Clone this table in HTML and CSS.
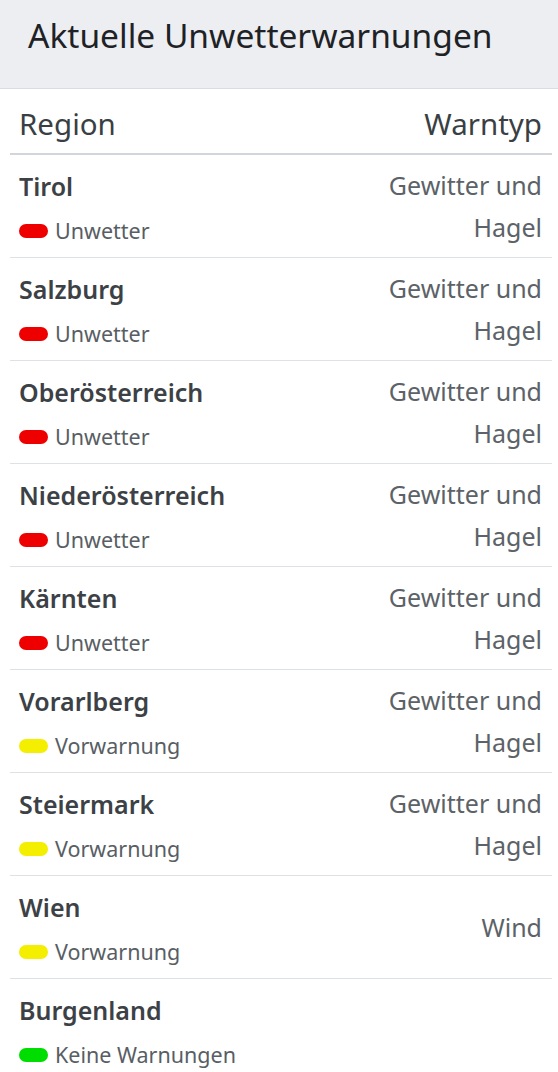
FILE: index.html
```html
<!DOCTYPE html>
<html lang="de">
<head>
<meta charset="utf-8">
<title>Aktuelle Unwetterwarnungen</title>
<link rel="stylesheet" href="styles.css">
</head>
<body>
<header class="panel-head">
  <h1 class="title">Aktuelle Unwetterwarnungen</h1>
</header>
<section class="warn-table">
  <div class="thead">
    <span class="th">Region</span>
    <span class="th th-right">Warntyp</span>
  </div>
  <div class="row">
    <div class="region"><div class="name">Tirol</div><div class="status"><span class="pill red"></span>Unwetter</div></div>
    <div class="type">Gewitter und<br>Hagel</div>
  </div>
  <div class="row">
    <div class="region"><div class="name">Salzburg</div><div class="status"><span class="pill red"></span>Unwetter</div></div>
    <div class="type">Gewitter und<br>Hagel</div>
  </div>
  <div class="row">
    <div class="region"><div class="name">Oberösterreich</div><div class="status"><span class="pill red"></span>Unwetter</div></div>
    <div class="type">Gewitter und<br>Hagel</div>
  </div>
  <div class="row">
    <div class="region"><div class="name">Niederösterreich</div><div class="status"><span class="pill red"></span>Unwetter</div></div>
    <div class="type">Gewitter und<br>Hagel</div>
  </div>
  <div class="row">
    <div class="region"><div class="name">Kärnten</div><div class="status"><span class="pill red"></span>Unwetter</div></div>
    <div class="type">Gewitter und<br>Hagel</div>
  </div>
  <div class="row">
    <div class="region"><div class="name">Vorarlberg</div><div class="status"><span class="pill yellow"></span>Vorwarnung</div></div>
    <div class="type">Gewitter und<br>Hagel</div>
  </div>
  <div class="row">
    <div class="region"><div class="name">Steiermark</div><div class="status"><span class="pill yellow"></span>Vorwarnung</div></div>
    <div class="type">Gewitter und<br>Hagel</div>
  </div>
  <div class="row">
    <div class="region"><div class="name">Wien</div><div class="status"><span class="pill yellow"></span>Vorwarnung</div></div>
    <div class="type">Wind</div>
  </div>
  <div class="row">
    <div class="region"><div class="name">Burgenland</div><div class="status"><span class="pill green"></span>Keine Warnungen</div></div>
    <div class="type"></div>
  </div>
</section>
</body>
</html>
```

FILE: styles.css
```css
html, body {
  margin: 0;
  padding: 0;
  background: #ffffff;
  font-family: "Noto Sans", "Open Sans", sans-serif;
}

.panel-head {
  background: #eceef1;
  height: 89px;
  border-bottom: 1px solid #d9dce0;
  padding: 19px 28px 0;
  box-sizing: border-box;
}

.title {
  margin: 0;
  font-size: 33.5px;
  font-weight: 400;
  color: #1e2226;
  line-height: 1;
}

.warn-table {
  margin: 0 6px 0 10px;
}

.thead {
  display: flex;
  justify-content: space-between;
  align-items: center;
  height: 59px;
  padding: 5px 10px 0 9px;
  border-bottom: 2px solid #d2d6da;
}

.th {
  font-size: 29.5px;
  color: #3a3f44;
  font-weight: 400;
}

.row {
  display: flex;
  justify-content: space-between;
  align-items: center;
  border-bottom: 1px solid #dee2e6;
  padding: 10px 10px 5px 9px;
}

.region {
  display: flex;
  flex-direction: column;
}

.name {
  font-size: 25px;
  font-weight: 600;
  line-height: 42px;
  color: #3c4146;
}

.status {
  display: flex;
  align-items: center;
  gap: 7px;
  margin-top: 3px;
  font-size: 21.5px;
  line-height: 42px;
  color: #585e64;
}

.pill {
  display: inline-block;
  width: 29px;
  height: 14px;
  border-radius: 7px;
  flex: none;
}

.red { background: #ee0000; }
.yellow { background: #f4ee00; }
.green { background: #00dd00; }

.type {
  text-align: right;
  font-size: 25px;
  line-height: 42px;
  color: #5c6267;
  margin-top: -3px;
  margin-bottom: 3px;
}
```
